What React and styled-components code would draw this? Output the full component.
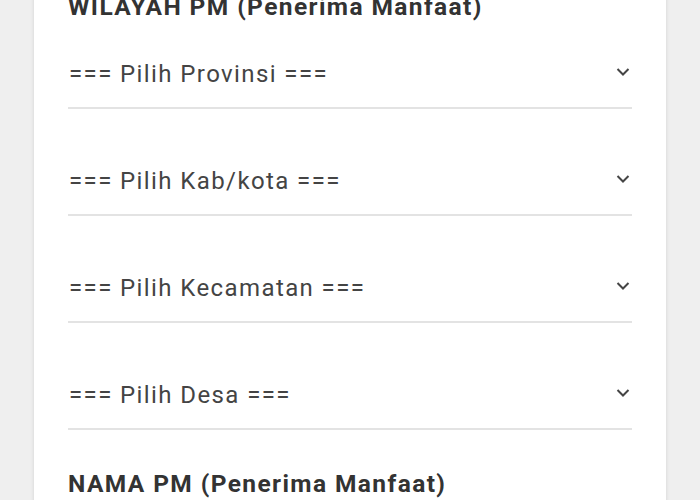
import React from "react";
import styled, { createGlobalStyle } from "styled-components";

const GlobalStyle = createGlobalStyle`
  html, body {
    margin: 0;
    padding: 0;
    background: #efefef;
    font-family: Roboto, "Noto Sans", sans-serif;
    overflow: hidden;
  }
`;

const Page = styled.div`
  padding: 0 34px;
  height: 500px;
  overflow: hidden;
`;

const Card = styled.div`
  background: #ffffff;
  box-shadow: 0 0 4px rgba(0, 0, 0, 0.12);
  padding: 0 34px 40px;
  min-height: 560px;
`;

const SectionTitle = styled.h3`
  margin: ${(p) => p.$margin || "0"};
  font-size: 24.5px;
  line-height: 28px;
  letter-spacing: 1.4px;
  font-weight: 700;
  color: #333333;
  white-space: nowrap;
`;

const Fields = styled.div`
  display: flex;
  flex-direction: column;
  gap: 19px;
`;

const SelectRow = styled.div`
  box-sizing: border-box;
  height: 88px;
  display: flex;
  align-items: flex-end;
  justify-content: space-between;
  padding: 0 2px 18px 1px;
  border-bottom: 2px solid #e3e3e3;
  cursor: pointer;
`;

const Placeholder = styled.span`
  font-size: 24px;
  line-height: 30px;
  letter-spacing: 1.4px;
  color: #444444;
  white-space: nowrap;
`;

const Chevron = styled.svg`
  width: 14px;
  height: 30px;
  color: #454545;
`;

const options = [
  "=== Pilih Provinsi ===",
  "=== Pilih Kab/kota ===",
  "=== Pilih Kecamatan ===",
  "=== Pilih Desa ===",
];

export default function App() {
  return (
    <>
      <GlobalStyle />
      <Page>
        <Card>
          <SectionTitle $margin="-7px 0 0">WILAYAH PM (Penerima Manfaat)</SectionTitle>
          <Fields>
            {options.map((label) => (
              <SelectRow key={label}>
                <Placeholder>{label}</Placeholder>
                <Chevron viewBox="0 0 14 30">
                  <polyline
                    points="1.5,10 7,15.5 12.5,10"
                    fill="none"
                    stroke="currentColor"
                    strokeWidth="2"
                  />
                </Chevron>
              </SelectRow>
            ))}
          </Fields>
          <SectionTitle $margin="40px 0 0">NAMA PM (Penerima Manfaat)</SectionTitle>
        </Card>
      </Page>
    </>
  );
}
